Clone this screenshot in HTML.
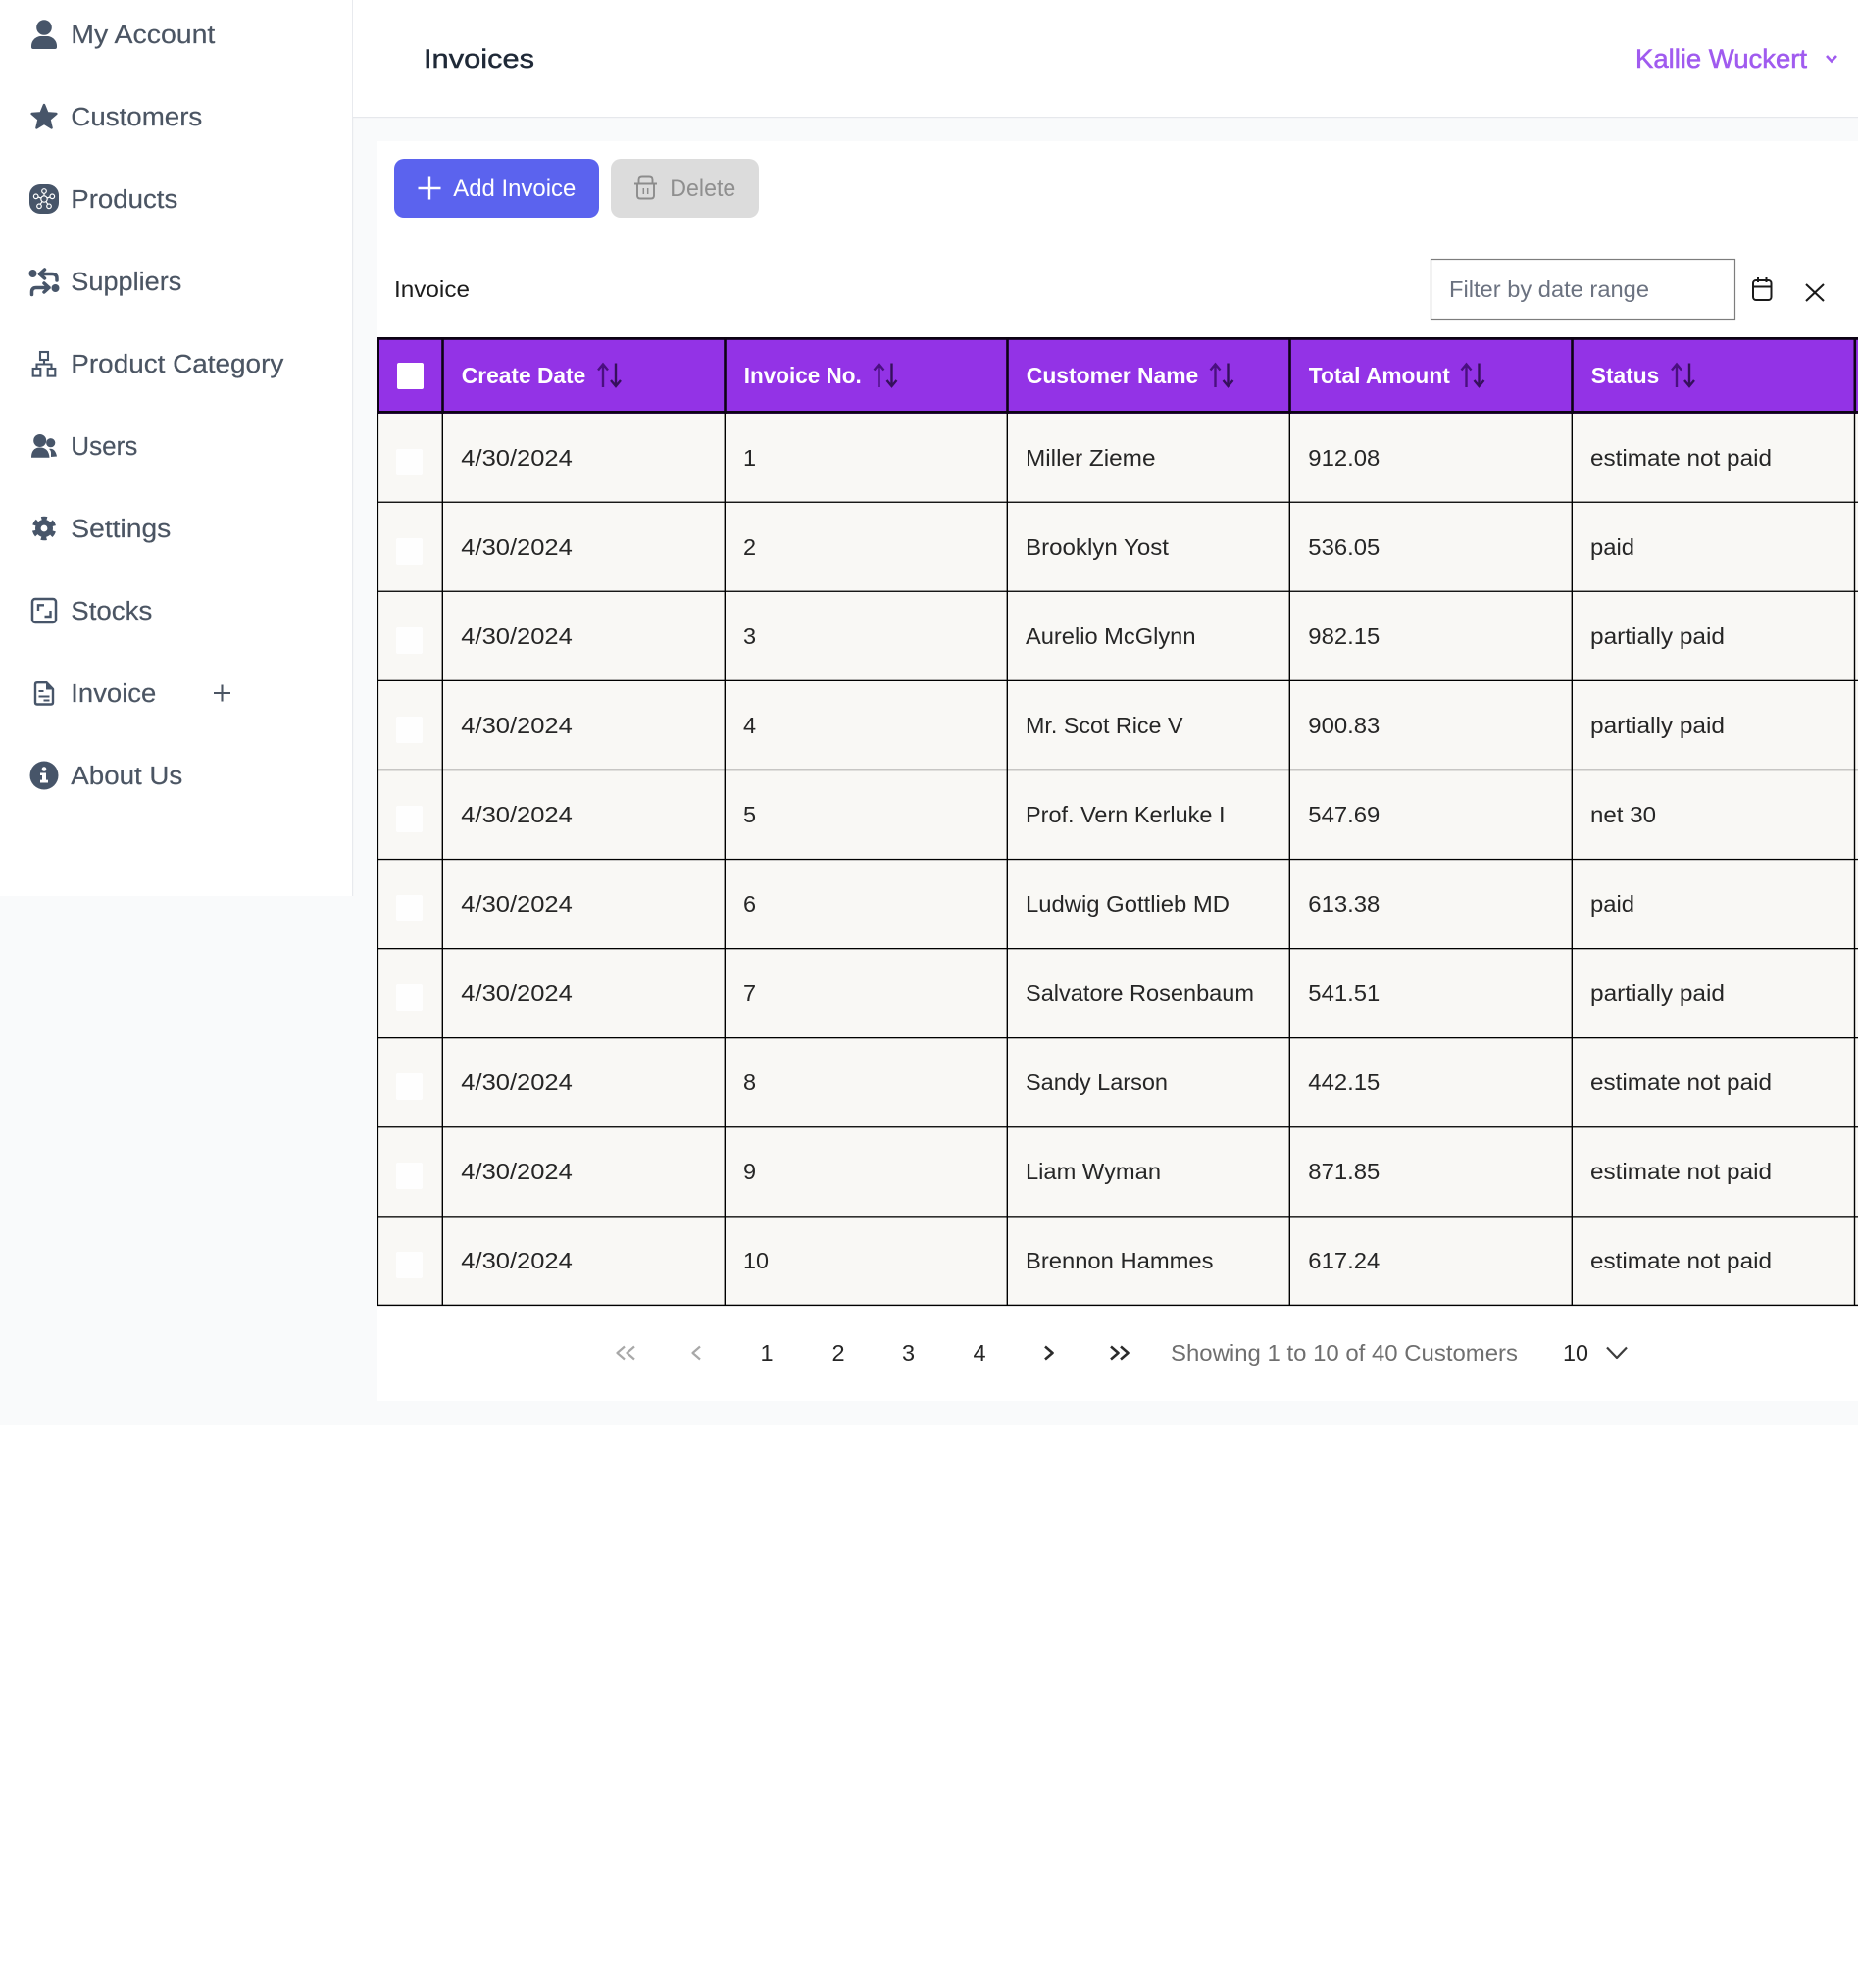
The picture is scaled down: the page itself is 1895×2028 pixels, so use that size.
<!DOCTYPE html>
<html lang="en"><head><meta charset="utf-8"><title>Invoices</title>
<style>
html,body{margin:0;padding:0;background:#fff;width:1895px;height:2028px;overflow:hidden}
svg{display:block;position:absolute;left:0;top:0}
text{font-family:"Liberation Sans",Arial,sans-serif;white-space:pre}
.n{font-size:25.5px;fill:#4b5563;stroke:#4b5563;stroke-width:.2px}
.c{font-size:23.5px;fill:#262626}
.h{font-size:23.5px;font-weight:700;fill:#fff}
.ic{fill:#475569;stroke:none}
.st{fill:none;stroke:#475569;stroke-linecap:round;stroke-linejoin:round}
.s1{stroke:#4a1080;stroke-width:2.4;fill:none}
.s2{stroke:#35105c;stroke-width:2.4;fill:none}
</style></head><body>
<svg width="1895" height="2028" viewBox="0 0 1895 2028" xmlns="http://www.w3.org/2000/svg">
<!-- backgrounds -->
<rect x="0" y="914" width="360" height="540" fill="#f9fafb"/>
<rect x="360" y="120" width="1535" height="1334" fill="#f9fafb"/>
<rect x="0" y="0" width="359" height="914" fill="#fff"/>
<rect x="359" y="0" width="1.2" height="914" fill="#e8eaee"/>
<rect x="360" y="0" width="1535" height="119" fill="#fff"/>
<rect x="360" y="119" width="1535" height="1.2" fill="#e6e8ec"/>
<rect x="384" y="144" width="1511" height="1285" fill="#fff"/>

<!-- sidebar icons -->
<circle class="ic" cx="45" cy="28" r="7.8"/>
<path class="ic" d="M32 47C32 41 37 37 42 37H48C53 37 58 41 58 47V48Q58 50 56 50H34Q32 50 32 48Z"/>
<polygon points="45,107 48.4,115.3 57.4,116 50.5,121.8 52.6,130.5 45,125.8 37.4,130.5 39.5,121.8 32.6,116 41.6,115.3" fill="#475569" stroke="#475569" stroke-width="2.4" stroke-linejoin="round"/>
<rect class="ic" x="30" y="188" width="30" height="30" rx="11"/>
<g fill="none" stroke="#fff" stroke-width="1.2">
<circle cx="45" cy="203" r="3.2"/><circle cx="45" cy="195" r="2.3"/><circle cx="36.7" cy="200.3" r="2.3"/><circle cx="53.3" cy="200.3" r="2.3"/><circle cx="40" cy="210.3" r="2.3"/><circle cx="50" cy="210.3" r="2.3"/>
<path d="M45 197.3V199.8M39 201L42 202M51 201L48 202M41.2 208.3L43 205.6M48.8 208.3L47 205.6"/>
</g>
<circle class="ic" cx="33.5" cy="279" r="4"/>
<circle class="ic" cx="56.5" cy="294" r="4"/>
<path class="st" stroke-width="3.5" d="M45.5 275L40.5 279.5L45.5 284M40.5 279.5H53Q58 279.5 58 284V286"/>
<path class="st" stroke-width="3.5" d="M45 289L50 293.5L45 298M50 293.5H37Q32.5 293.5 32.5 298V300.5"/>
<g fill="none" stroke="#475569" stroke-width="2.1">
<rect x="41" y="359" width="8" height="8"/><rect x="33.7" y="376" width="7.6" height="7.6"/><rect x="48.7" y="376" width="7.6" height="7.6"/>
<path d="M45 367V371.5M37.5 376V371.5H52.5V376"/>
</g>
<circle class="ic" cx="40.7" cy="449.5" r="6.5"/>
<circle class="ic" cx="51.7" cy="451.7" r="4.6"/>
<path class="ic" d="M32 466.7C32 459 36 456.5 41 456.5C46 456.5 50 459.5 50.5 466.7Z"/>
<path class="ic" d="M52 466V462C52 460 51 458.8 50 458C54 457 57 460 58 465.5Z"/>
<circle cx="45" cy="539" r="6.2" fill="none" stroke="#475569" stroke-width="5.6"/>
<circle cx="45" cy="539" r="10.4" fill="none" stroke="#475569" stroke-width="3.8" stroke-dasharray="5.6 5.3" transform="rotate(-105 45 539)"/>
<rect x="33" y="611" width="24" height="24" rx="3" fill="none" stroke="#475569" stroke-width="2.5"/>
<path d="M39 623V617.3H45M51.5 623V629H45.5" fill="none" stroke="#475569" stroke-width="2.4"/>
<path d="M38 696.2H47.5L54 703V716.5Q54 718.5 52 718.5H38Q36 718.5 36 716.5V698.2Q36 696.2 38 696.2Z" fill="none" stroke="#475569" stroke-width="2.4" stroke-linejoin="round"/>
<path class="ic" d="M47 696V703.5H54.5Z"/>
<path d="M39.5 705H44.5M39.5 710.5H50.5M44.5 714.5H50.5" stroke="#475569" stroke-width="2" fill="none"/>
<circle class="ic" cx="45" cy="791" r="14.5"/>
<circle cx="45" cy="784.5" r="2.3" fill="#fff"/>
<path fill="#fff" d="M41 788.5H47V795.6H49V798.5H41V795.6H43V791H41Z"/>
<path d="M226.5 698.5V715.5M218 707H235" stroke="#4b5563" stroke-width="2.1" fill="none"/>

<!-- sidebar text -->
<text class="n" x="72.3" y="43.9" textLength="147" lengthAdjust="spacingAndGlyphs">My Account</text>
<text class="n" x="72.3" y="127.9" textLength="134" lengthAdjust="spacingAndGlyphs">Customers</text>
<text class="n" x="72.3" y="211.9" textLength="109" lengthAdjust="spacingAndGlyphs">Products</text>
<text class="n" x="72.3" y="295.9" textLength="113" lengthAdjust="spacingAndGlyphs">Suppliers</text>
<text class="n" x="72.3" y="379.9" textLength="217" lengthAdjust="spacingAndGlyphs">Product Category</text>
<text class="n" x="72.3" y="463.9" textLength="68" lengthAdjust="spacingAndGlyphs">Users</text>
<text class="n" x="72.3" y="547.9" textLength="102" lengthAdjust="spacingAndGlyphs">Settings</text>
<text class="n" x="72.3" y="631.9" textLength="83" lengthAdjust="spacingAndGlyphs">Stocks</text>
<text class="n" x="72.3" y="715.9" textLength="87" lengthAdjust="spacingAndGlyphs">Invoice</text>
<text class="n" x="72.3" y="799.9" textLength="114" lengthAdjust="spacingAndGlyphs">About Us</text>

<!-- top bar -->
<text x="432" y="69" font-size="26.5" fill="#1f2937" stroke="#1f2937" stroke-width=".45" textLength="113" lengthAdjust="spacingAndGlyphs">Invoices</text>
<text x="1668" y="69" font-size="26.5" fill="#a05bef" stroke="#a05bef" stroke-width=".55" textLength="175" lengthAdjust="spacingAndGlyphs">Kallie Wuckert</text>
<path d="M1863 57L1868 62.5L1873 57" fill="none" stroke="#a05bef" stroke-width="2.6"/>

<!-- buttons -->
<rect x="402" y="162" width="209" height="60" rx="10" fill="#5b63ee"/>
<path d="M438 180.5V203.5M426.5 192H449.5" stroke="#fff" stroke-width="2.4" fill="none"/>
<text x="462.3" y="200" font-size="24" fill="#fff" textLength="125" lengthAdjust="spacingAndGlyphs">Add Invoice</text>
<rect x="623" y="162" width="151" height="60" rx="10" fill="#dcdcdc"/>
<g fill="none" stroke="#8c8c8c" stroke-width="1.9">
<path d="M647 187.5H670M651.5 187.5V183.5Q651.5 180.5 655 180.5H662Q665.5 180.5 665.5 183.5V187.5"/>
<path d="M650 187.5V199.5Q650 202.5 653 202.5H664Q667 202.5 667 199.5V187.5"/>
<path d="M656.3 192V198M660.7 192V198" stroke-width="1.5"/>
</g>
<text x="683.3" y="200" font-size="24" fill="#8f8f8f" textLength="67" lengthAdjust="spacingAndGlyphs">Delete</text>

<!-- filter row -->
<text x="402" y="303" font-size="23.5" fill="#1c1c1c" textLength="77" lengthAdjust="spacingAndGlyphs">Invoice</text>
<rect x="1459.5" y="264.5" width="310" height="61" fill="#fff" stroke="#7d7d7d" stroke-width="1.2"/>
<text x="1478" y="303" font-size="23.5" fill="#6b7280" textLength="204" lengthAdjust="spacingAndGlyphs">Filter by date range</text>
<g fill="none" stroke="#1a1a1a" stroke-width="2">
<rect x="1788" y="286" width="18.5" height="20" rx="3"/>
<path d="M1788 292.5H1806.5M1793 283V288M1801.5 283V288"/>
<path d="M1842 290L1860 307M1860 290L1842 307" stroke-width="2.1"/>
</g>

<!-- table body -->
<rect x="385" y="421" width="1510" height="911" fill="#f9f8f5"/>
<g fill="#000">
<rect x="385" y="511.6" width="1510" height="1.3"/><rect x="385" y="602.6" width="1510" height="1.3"/><rect x="385" y="693.7" width="1510" height="1.3"/><rect x="385" y="784.8" width="1510" height="1.3"/><rect x="385" y="875.9" width="1510" height="1.3"/><rect x="385" y="967" width="1510" height="1.3"/><rect x="385" y="1058" width="1510" height="1.3"/><rect x="385" y="1149.1" width="1510" height="1.3"/><rect x="385" y="1240.2" width="1510" height="1.3"/><rect x="385" y="1330.7" width="1510" height="1.4"/>
<rect x="384.7" y="421" width="1.4" height="911"/><rect x="450.6" y="421" width="1.4" height="911"/><rect x="738.6" y="421" width="1.4" height="911"/><rect x="1026.6" y="421" width="1.4" height="911"/><rect x="1314.6" y="421" width="1.4" height="911"/><rect x="1602.6" y="421" width="1.4" height="911"/><rect x="1890.8" y="421" width="1.4" height="911"/>
</g>
<g fill="#fefefe">
<rect x="404" y="458" width="27" height="27" rx="2"/><rect x="404" y="549" width="27" height="27" rx="2"/><rect x="404" y="640" width="27" height="27" rx="2"/><rect x="404" y="731" width="27" height="27" rx="2"/><rect x="404" y="822" width="27" height="27" rx="2"/><rect x="404" y="913" width="27" height="27" rx="2"/><rect x="404" y="1004" width="27" height="27" rx="2"/><rect x="404" y="1095" width="27" height="27" rx="2"/><rect x="404" y="1186" width="27" height="27" rx="2"/><rect x="404" y="1277" width="27" height="27" rx="2"/>
</g>

<!-- table head -->
<rect x="384" y="344" width="1511" height="78" fill="#9333e6"/>
<g fill="#0d0314">
<rect x="384" y="344" width="1511" height="2.8"/>
<rect x="384" y="419" width="1511" height="2.8"/>
<rect x="384" y="344" width="3" height="78"/><rect x="450.2" y="344" width="2.6" height="78"/><rect x="738.2" y="344" width="2.6" height="78"/><rect x="1026.2" y="344" width="2.6" height="78"/><rect x="1314.2" y="344" width="2.6" height="78"/><rect x="1602.2" y="344" width="2.6" height="78"/><rect x="1890.5" y="344" width="2.6" height="78"/>
</g>
<rect x="405" y="370" width="27" height="27" rx="2" fill="#fff"/>
<text class="h" x="470.8" y="391" textLength="126.5" lengthAdjust="spacingAndGlyphs">Create Date</text>
<text class="h" x="758.8" y="391" textLength="120" lengthAdjust="spacingAndGlyphs">Invoice No.</text>
<text class="h" x="1046.8" y="391" textLength="175.5" lengthAdjust="spacingAndGlyphs">Customer Name</text>
<text class="h" x="1334.8" y="391" textLength="144" lengthAdjust="spacingAndGlyphs">Total Amount</text>
<text class="h" x="1622.8" y="391" textLength="69.5" lengthAdjust="spacingAndGlyphs">Status</text>
<g id="sorts">
<path class="s1" d="M615 395V372M610 377.5L615 371.5L620 377.5"/><path class="s2" d="M628 370.5V393.5M623 388L628 394L633 388"/>
<path class="s1" d="M896.5 395V372M891.5 377.5L896.5 371.5L901.5 377.5"/><path class="s2" d="M909.5 370.5V393.5M904.5 388L909.5 394L914.5 388"/>
<path class="s1" d="M1239.5 395V372M1234.5 377.5L1239.5 371.5L1244.5 377.5"/><path class="s2" d="M1252.5 370.5V393.5M1247.5 388L1252.5 394L1257.5 388"/>
<path class="s1" d="M1495.5 395V372M1490.5 377.5L1495.5 371.5L1500.5 377.5"/><path class="s2" d="M1508.5 370.5V393.5M1503.5 388L1508.5 394L1513.5 388"/>
<path class="s1" d="M1710 395V372M1705 377.5L1710 371.5L1715 377.5"/><path class="s2" d="M1723 370.5V393.5M1718 388L1723 394L1728 388"/>
</g>

<!-- rows -->
<g class="c">
<text class="c" x="470.3" y="475" textLength="113.5" lengthAdjust="spacingAndGlyphs">4/30/2024</text><text class="c" x="758" y="475">1</text><text class="c" x="1046" y="475" textLength="132.5" lengthAdjust="spacingAndGlyphs">Miller Zieme</text><text class="c" x="1334.3" y="475" textLength="73" lengthAdjust="spacingAndGlyphs">912.08</text><text class="c" x="1622" y="475" textLength="185" lengthAdjust="spacingAndGlyphs">estimate not paid</text>
<text class="c" x="470.3" y="566" textLength="113.5" lengthAdjust="spacingAndGlyphs">4/30/2024</text><text class="c" x="758" y="566">2</text><text class="c" x="1046" y="566" textLength="146" lengthAdjust="spacingAndGlyphs">Brooklyn Yost</text><text class="c" x="1334.3" y="566" textLength="73" lengthAdjust="spacingAndGlyphs">536.05</text><text class="c" x="1622" y="566" textLength="45" lengthAdjust="spacingAndGlyphs">paid</text>
<text class="c" x="470.3" y="657" textLength="113.5" lengthAdjust="spacingAndGlyphs">4/30/2024</text><text class="c" x="758" y="657">3</text><text class="c" x="1046" y="657" textLength="173.5" lengthAdjust="spacingAndGlyphs">Aurelio McGlynn</text><text class="c" x="1334.3" y="657" textLength="73" lengthAdjust="spacingAndGlyphs">982.15</text><text class="c" x="1622" y="657" textLength="137" lengthAdjust="spacingAndGlyphs">partially paid</text>
<text class="c" x="470.3" y="748" textLength="113.5" lengthAdjust="spacingAndGlyphs">4/30/2024</text><text class="c" x="758" y="748">4</text><text class="c" x="1046" y="748" textLength="160.5" lengthAdjust="spacingAndGlyphs">Mr. Scot Rice V</text><text class="c" x="1334.3" y="748" textLength="73" lengthAdjust="spacingAndGlyphs">900.83</text><text class="c" x="1622" y="748" textLength="137" lengthAdjust="spacingAndGlyphs">partially paid</text>
<text class="c" x="470.3" y="839" textLength="113.5" lengthAdjust="spacingAndGlyphs">4/30/2024</text><text class="c" x="758" y="839">5</text><text class="c" x="1046" y="839" textLength="203.5" lengthAdjust="spacingAndGlyphs">Prof. Vern Kerluke I</text><text class="c" x="1334.3" y="839" textLength="73" lengthAdjust="spacingAndGlyphs">547.69</text><text class="c" x="1622" y="839" textLength="67" lengthAdjust="spacingAndGlyphs">net 30</text>
<text class="c" x="470.3" y="930" textLength="113.5" lengthAdjust="spacingAndGlyphs">4/30/2024</text><text class="c" x="758" y="930">6</text><text class="c" x="1046" y="930" textLength="208" lengthAdjust="spacingAndGlyphs">Ludwig Gottlieb MD</text><text class="c" x="1334.3" y="930" textLength="73" lengthAdjust="spacingAndGlyphs">613.38</text><text class="c" x="1622" y="930" textLength="45" lengthAdjust="spacingAndGlyphs">paid</text>
<text class="c" x="470.3" y="1021" textLength="113.5" lengthAdjust="spacingAndGlyphs">4/30/2024</text><text class="c" x="758" y="1021">7</text><text class="c" x="1046" y="1021" textLength="233" lengthAdjust="spacingAndGlyphs">Salvatore Rosenbaum</text><text class="c" x="1334.3" y="1021" textLength="73" lengthAdjust="spacingAndGlyphs">541.51</text><text class="c" x="1622" y="1021" textLength="137" lengthAdjust="spacingAndGlyphs">partially paid</text>
<text class="c" x="470.3" y="1112" textLength="113.5" lengthAdjust="spacingAndGlyphs">4/30/2024</text><text class="c" x="758" y="1112">8</text><text class="c" x="1046" y="1112" textLength="145" lengthAdjust="spacingAndGlyphs">Sandy Larson</text><text class="c" x="1334.3" y="1112" textLength="73" lengthAdjust="spacingAndGlyphs">442.15</text><text class="c" x="1622" y="1112" textLength="185" lengthAdjust="spacingAndGlyphs">estimate not paid</text>
<text class="c" x="470.3" y="1203" textLength="113.5" lengthAdjust="spacingAndGlyphs">4/30/2024</text><text class="c" x="758" y="1203">9</text><text class="c" x="1046" y="1203" textLength="138" lengthAdjust="spacingAndGlyphs">Liam Wyman</text><text class="c" x="1334.3" y="1203" textLength="73" lengthAdjust="spacingAndGlyphs">871.85</text><text class="c" x="1622" y="1203" textLength="185" lengthAdjust="spacingAndGlyphs">estimate not paid</text>
<text class="c" x="470.3" y="1294" textLength="113.5" lengthAdjust="spacingAndGlyphs">4/30/2024</text><text class="c" x="758" y="1294" textLength="26" lengthAdjust="spacingAndGlyphs">10</text><text class="c" x="1046" y="1294" textLength="191.5" lengthAdjust="spacingAndGlyphs">Brennon Hammes</text><text class="c" x="1334.3" y="1294" textLength="73" lengthAdjust="spacingAndGlyphs">617.24</text><text class="c" x="1622" y="1294" textLength="185" lengthAdjust="spacingAndGlyphs">estimate not paid</text>
</g>

<!-- pagination -->
<g fill="none" stroke-width="2.2" stroke-linejoin="round">
<path stroke="#a8a8a8" d="M637 1373.5L629.5 1380L637 1386.5M647 1373.5L639.5 1380L647 1386.5"/>
<path stroke="#a8a8a8" d="M714 1373.5L706.5 1380L714 1386.5"/>
<path stroke="#2b2b2b" stroke-width="2.6" d="M1066 1373.5L1073.5 1380L1066 1386.5"/>
<path stroke="#2b2b2b" stroke-width="2.6" d="M1133 1373.5L1140.5 1380L1133 1386.5M1143 1373.5L1150.5 1380L1143 1386.5"/>
<path stroke="#3d3d3d" stroke-width="2.2" d="M1639 1374.5L1649 1385L1659 1374.5"/>
</g>
<text class="c" x="782" y="1388" text-anchor="middle">1</text>
<text class="c" x="855" y="1388" text-anchor="middle">2</text>
<text class="c" x="926.5" y="1388" text-anchor="middle">3</text>
<text class="c" x="999" y="1388" text-anchor="middle">4</text>
<text x="1194" y="1388" font-size="23.5" fill="#6f6f6f" textLength="354" lengthAdjust="spacingAndGlyphs">Showing 1 to 10 of 40 Customers</text>
<text class="c" x="1594" y="1388" textLength="26" lengthAdjust="spacingAndGlyphs">10</text>
</svg>
</body></html>
